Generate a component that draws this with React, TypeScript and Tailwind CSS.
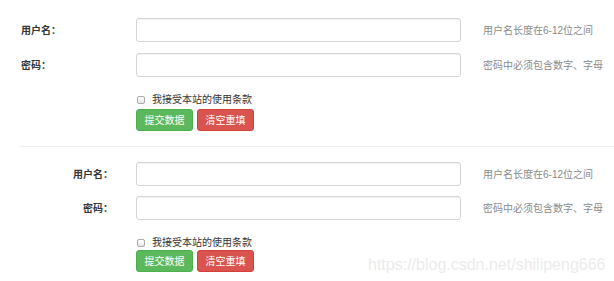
const font = "font-['Liberation_Sans','Noto_Sans_CJK_SC',sans-serif]";

function Row({ label, help, align, className }: { label: string; help: string; align: "left" | "right"; className?: string }) {
  return (
    <div className={`flex items-center h-[24px] ${className ?? ""}`}>
      {align === "left" ? (
        <label className="w-[136px] pl-[21px] text-[10px] font-bold text-[#333]">{label}</label>
      ) : (
        <label className="w-[136px] pr-[23px] text-right text-[10px] font-bold text-[#333]">{label}</label>
      )}
      <input
        type="text"
        className="w-[325px] h-[24px] border border-[#d4d4d4] rounded-[3px] bg-white shadow-[inset_0_1px_1px_rgba(0,0,0,0.06)] outline-none"
      />
      <span className="ml-[22px] text-[10px] text-[#8a8a8a] whitespace-nowrap">{help}</span>
    </div>
  );
}

function Actions({ className, btnTop }: { className?: string; btnTop: string }) {
  return (
    <div className={`pl-[136px] ${className ?? ""}`}>
      <div className="flex items-center h-[12px]">
        <span className="ml-[1px] w-[8px] h-[8px] rounded-[2px] border border-[#aaa] bg-gradient-to-b from-white to-[#e6e6e6]" />
        <span className="ml-[7px] text-[10px] text-[#333] leading-none">我接受本站的使用条款</span>
      </div>
      <div className={`flex gap-[4px] ${btnTop}`}>
        <button className="w-[57px] h-[22px] rounded-[3px] bg-[#5cb85c] border border-[#4cae4c] text-white text-[10px]">
          提交数据
        </button>
        <button className="w-[57px] h-[22px] rounded-[3px] bg-[#d9534f] border border-[#d43f3a] text-white text-[10px]">
          清空重填
        </button>
      </div>
    </div>
  );
}

export default function App() {
  return (
    <div className={`w-[614px] h-[281px] bg-white relative overflow-hidden ${font}`}>
      <form className="pt-[18px]">
        <Row label="用户名：" help="用户名长度在6-12位之间" align="left" />
        <Row label="密码：" help="密码中必须包含数字、字母" align="left" className="mt-[11px]" />
        <Actions className="mt-[17px]" btnTop="mt-[3px]" />
      </form>

      <div className="mt-[15px] ml-[20px] border-t border-[#eee]" />

      <form className="mt-[15px]">
        <Row label="用户名：" help="用户名长度在6-12位之间" align="right" />
        <Row label="密码：" help="密码中必须包含数字、字母" align="right" className="mt-[10px]" />
        <Actions className="mt-[17px]" btnTop="mt-[1px]" />
      </form>

      <span className="absolute left-[368px] top-[253px] text-[16px] text-[#ebebeb] whitespace-nowrap font-['Liberation_Sans',sans-serif]">
        https://blog.csdn.net/shilipeng666
      </span>
    </div>
  );
}
